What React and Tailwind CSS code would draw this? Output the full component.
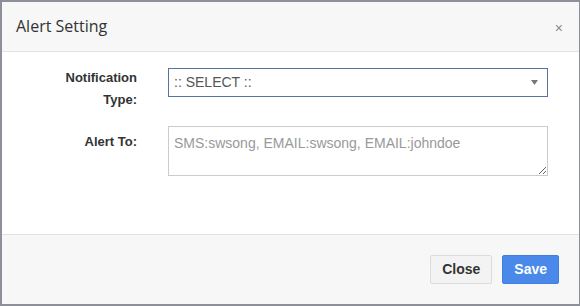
export default function App() {
  return (
    <div className="w-[580px] h-[306px] bg-[#8d9098] pt-[2px] pl-[2px] pr-[1px] pb-[2px]">
      <div className="h-full w-full flex flex-col bg-white" style={{ fontFamily: '"Liberation Sans", Arial, sans-serif' }}>
        <div className="h-[50px] shrink-0 bg-[#f7f7f7] border-b border-[#e2e2e2] flex items-center justify-between pl-[14px] pr-[16px]">
          <span className="text-[16px] text-[#333] pb-[1px]" style={{ fontFamily: '"Open Sans", "Noto Sans", sans-serif' }}>Alert Setting</span>
          <span className="text-[14px] text-[#8c8c8c] leading-none pt-[2px]">×</span>
        </div>
        <div className="flex-1 flex flex-col pt-[16px] gap-[15px]">
          <div className="flex items-start">
            <label className="w-[135px] text-right text-[13px] font-bold text-[#333] leading-[22px] -mt-[1px]">Notification<br />Type:</label>
            <div className="ml-[31px] w-[380px] h-[29px] border border-[#56739f] flex items-center justify-between pl-[5px] pr-[9px] text-[14px] text-[#555]">
              <span>:: SELECT ::</span>
              <svg width="7" height="5" viewBox="0 0 7 5"><path d="M0 0 H7 L3.5 5 Z" fill="#777" /></svg>
            </div>
          </div>
          <div className="flex items-start">
            <label className="w-[135px] text-right text-[13px] font-bold text-[#333] leading-[22px] pt-[5px]">Alert To:</label>
            <textarea
              className="ml-[31px] w-[380px] h-[50px] border border-[#cccccc] px-[5px] pt-[6px] text-[14px] text-[#555] placeholder-[#999] outline-none"
              placeholder="SMS:swsong, EMAIL:swsong, EMAIL:johndoe"
            />
          </div>
        </div>
        <div className="h-[70px] shrink-0 bg-[#f7f7f7] border-t border-[#e2e2e2] flex items-center justify-end gap-[10px] pr-[20px]">
          <button className="h-[29px] px-[11px] bg-[#f3f3f3] border border-[#dcdcdc] rounded-[2px] text-[14px] font-bold text-[#333]">Close</button>
          <button className="h-[29px] px-[11px] bg-[#4a89ea] border border-[#3f7fe0] rounded-[2px] text-[14px] font-bold text-white">Save</button>
        </div>
      </div>
    </div>
  );
}
